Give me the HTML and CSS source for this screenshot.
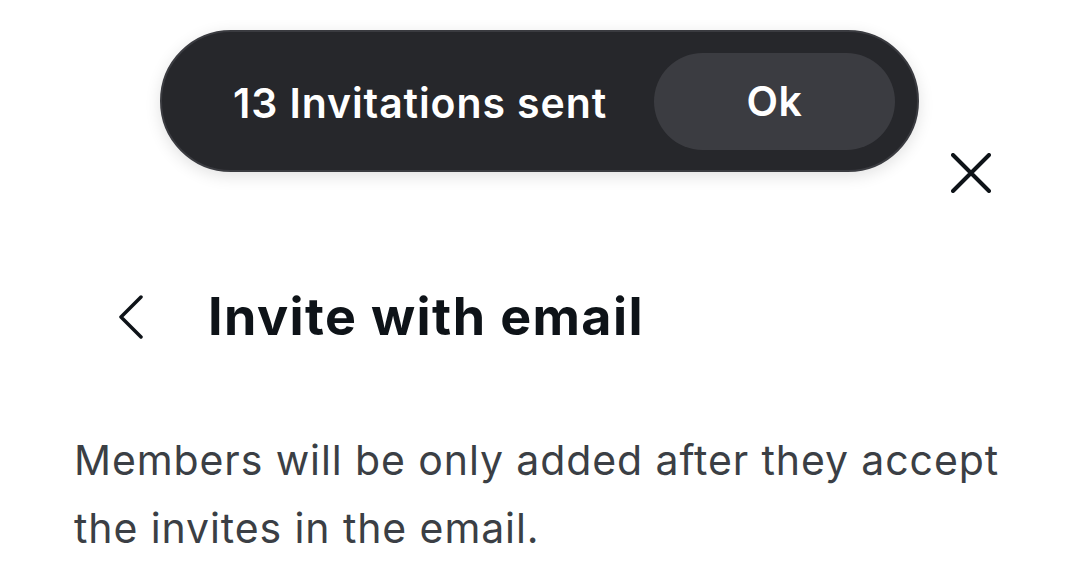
FILE: index.html
```html
<!DOCTYPE html>
<html lang="en">
<head>
    <meta charset="UTF-8">
    <meta name="viewport" content="width=device-width, initial-scale=1.0">
    <title>Invite with email</title>
    <link rel="stylesheet" href="styles.css">
</head>
<body>
    <div class="panel">
        <!-- Toast -->
        <div class="toast">
            <span class="toast-text">13 Invitations sent</span>
            <button class="toast-btn">Ok</button>
        </div>

        <div class="close-row">
            <button class="icon-btn close-btn" aria-label="Close">
                <svg width="40" height="40" viewBox="0 0 40 40">
                    <path d="M2 2 L38 38 M38 2 L2 38" stroke="#0e1318" stroke-width="4" stroke-linecap="round" fill="none"/>
                </svg>
            </button>
        </div>

        <div class="header">
            <button class="icon-btn back-btn" aria-label="Back">
                <svg width="26" height="44" viewBox="0 0 26 44">
                    <path d="M23 2 L3 22 L23 42" stroke="#0e1318" stroke-width="3.5" stroke-linecap="round" stroke-linejoin="round" fill="none"/>
                </svg>
            </button>
            <h1>Invite with email</h1>
        </div>

        <p class="desc">Members will be only added after they accept the invites in the email.</p>
    </div>
</body>
</html>
```

FILE: styles.css
```css
body {
    margin: 0;
    background-color: #ffffff;
    font-family: 'Inter', 'Roboto', 'Liberation Sans', sans-serif;
    color: #0e1318;
}

.panel {
    position: relative;
    width: 1080px;
    height: 573px;
    overflow: hidden;
    padding-top: 153px;
    box-sizing: border-box;
}

.toast {
    position: absolute;
    top: 30px;
    left: 160px;
    width: 759px;
    height: 142px;
    box-sizing: border-box;
    display: flex;
    align-items: center;
    justify-content: space-between;
    padding: 0 22px 0 71px;
    background-color: #26272b;
    border: 2px solid #3a3b40;
    border-radius: 72px;
    box-shadow: 0 4px 16px rgba(0,0,0,0.12);
}

.toast-text {
    color: #ffffff;
    font-size: 41px;
    font-weight: 600;
    letter-spacing: 0.9px;
    margin-top: 4px;
}

.toast-btn {
    width: 241px;
    height: 97px;
    border: none;
    border-radius: 49px;
    background-color: #3b3c41;
    color: #ffffff;
    font-family: inherit;
    font-size: 41px;
    font-weight: 600;
    letter-spacing: 0.5px;
    cursor: pointer;
    margin-top: 0;
}

.icon-btn {
    background: none;
    border: none;
    padding: 0;
    cursor: pointer;
    display: flex;
}

.close-row {
    display: flex;
    justify-content: flex-end;
    padding-right: 89px;
}

.header {
    display: flex;
    align-items: center;
    gap: 64px;
    margin-top: 98px;
    padding-left: 118px;
}

h1 {
    margin: 0;
    font-size: 52px;
    font-weight: 700;
    line-height: 1;
    letter-spacing: 1.4px;
}

.desc {
    margin: 83px 0 0 74px;
    width: 960px;
    font-size: 41px;
    line-height: 68px;
    letter-spacing: 0.9px;
    color: #3b3f45;
}
```
